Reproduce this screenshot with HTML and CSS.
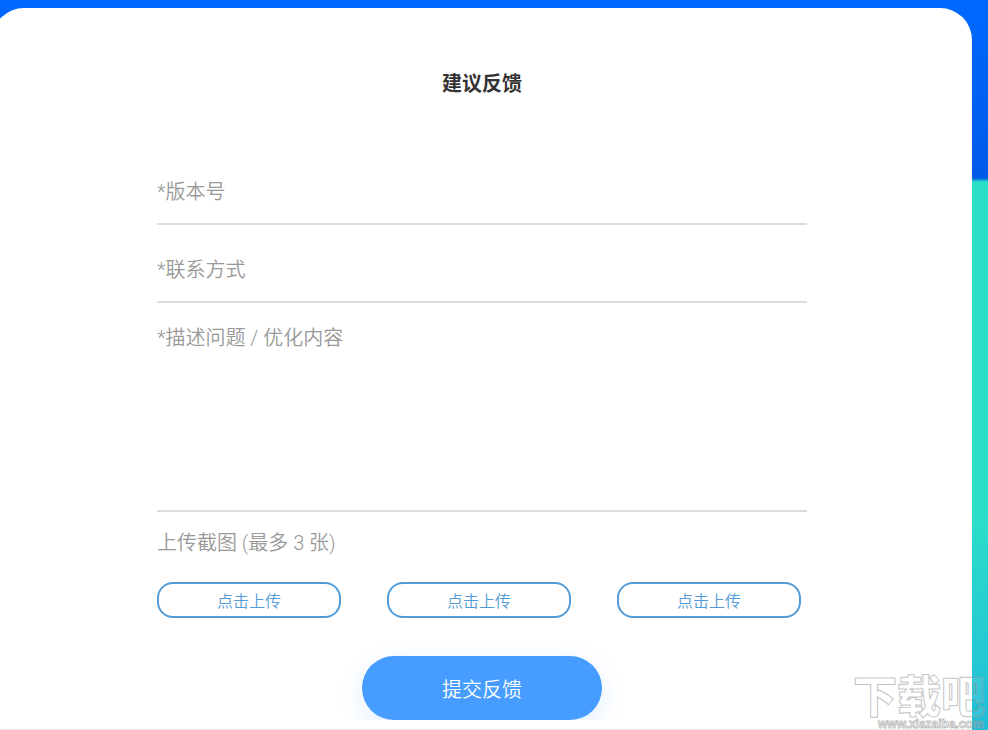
FILE: index.html
```html
<!DOCTYPE html>
<html lang="zh-CN">
<head>
  <meta charset="UTF-8" />
  <meta name="viewport" content="width=device-width, initial-scale=1.0"/>
  <title>建议反馈</title>
  <link rel="stylesheet" href="styles.css">
</head>
<body>

  <div class="card">
    <form class="feedback">
      <h1>建议反馈</h1>
      <input class="field" type="text" name="version" placeholder="*版本号" aria-label="版本号">
      <input class="field" type="text" name="contact" placeholder="*联系方式" aria-label="联系方式">
      <textarea class="field" name="content" placeholder="*描述问题 / 优化内容" aria-label="描述问题 / 优化内容"></textarea>

      <p class="upload-title">上传截图 (最多 3 张)</p>
      <div class="uploads">
        <button type="button" class="upload-btn">点击上传</button>
        <button type="button" class="upload-btn">点击上传</button>
        <button type="button" class="upload-btn">点击上传</button>
      </div>

      <div class="submit-row">
        <button type="submit" class="submit-btn">提交反馈</button>
      </div>
    </form>
  </div>

  <div class="watermark">
    <svg width="136" height="60" viewBox="0 0 136 60">
      <text class="mark-name" x="1" y="43">下载吧</text>
      <text class="mark-url" x="26" y="58">www.xiazaiba.com</text>
    </svg>
  </div>

</body>
</html>
```

FILE: styles.css
```css
* {
  box-sizing: border-box;
}
body {
  margin: 0;
  padding: 8px 16px 0 0;
  min-height: 100vh;
  overflow: hidden;
  font-family: Roboto, "Noto Sans CJK SC", sans-serif;
  font-size: 20px;
  color: #333;
  background:
    linear-gradient(#0068ff, #005ae8 178px, #2ce0c8) top / 100% 182px no-repeat,
    linear-gradient(#2ce0c8 500px, #20bcd8 730px);
}
.card {
  margin-left: -8px;
  padding: 60px 0 9px;
  background: #fff;
  border-bottom: 1px solid #eee;
  border-radius: 32px 32px 0 0;
}
.feedback {
  width: 650px;
  max-width: 90%;
  margin: 0 auto;
}
h1 {
  margin: 0 0 57px;
  font-size: 20px;
  line-height: 32px;
  text-align: center;
}
.field {
  display: block;
  width: 100%;
  height: 68px;
  margin: 0 0 10px;
  padding: 4px 0 0;
  border: none;
  border-bottom: 2px solid #dcdcdc;
  outline: none;
  background: none;
  font-family: inherit;
  font-size: 20px;
  font-weight: 350;
  color: #333;
}
.field::placeholder {
  color: #999;
}
textarea.field {
  height: 199px;
  margin-bottom: 16px;
  padding: 10px 0;
  line-height: 30px;
  resize: none;
}
.upload-title {
  margin: 0 0 24px;
  line-height: 30px;
  font-weight: 350;
  color: #999;
}
.uploads {
  display: flex;
  gap: 46px;
}
.upload-btn {
  width: 184px;
  height: 36px;
  padding: 0;
  border: 2px solid #529bd6;
  border-radius: 16px;
  background: #fff;
  font-family: inherit;
  font-size: 16px;
  font-weight: 350;
  color: #529bd6;
  cursor: pointer;
}
.submit-row {
  display: flex;
  justify-content: center;
  padding-top: 38px;
  overflow: hidden;
}
.submit-btn {
  width: 240px;
  height: 64px;
  border: none;
  border-radius: 32px;
  background: #469cff;
  box-shadow: 0 8px 24px rgba(70, 156, 255, 0.16);
  font-family: inherit;
  font-size: 20px;
  font-weight: 350;
  color: #fff;
  cursor: pointer;
}
/* site mark, over the bottom corner of the page */
.watermark {
  position: absolute;
  right: 0;
  bottom: 0;
  pointer-events: none;
}
.watermark svg {
  display: block;
}
.watermark text {
  fill: #fff;
  fill-opacity: 0.1;
  stroke: #999;
  stroke-opacity: 0.6;
}
.mark-name {
  font-size: 44px;
  font-weight: 900;
}
.mark-url {
  font-family: "Liberation Sans", sans-serif;
  font-size: 12px;
  font-weight: 700;
}
```
